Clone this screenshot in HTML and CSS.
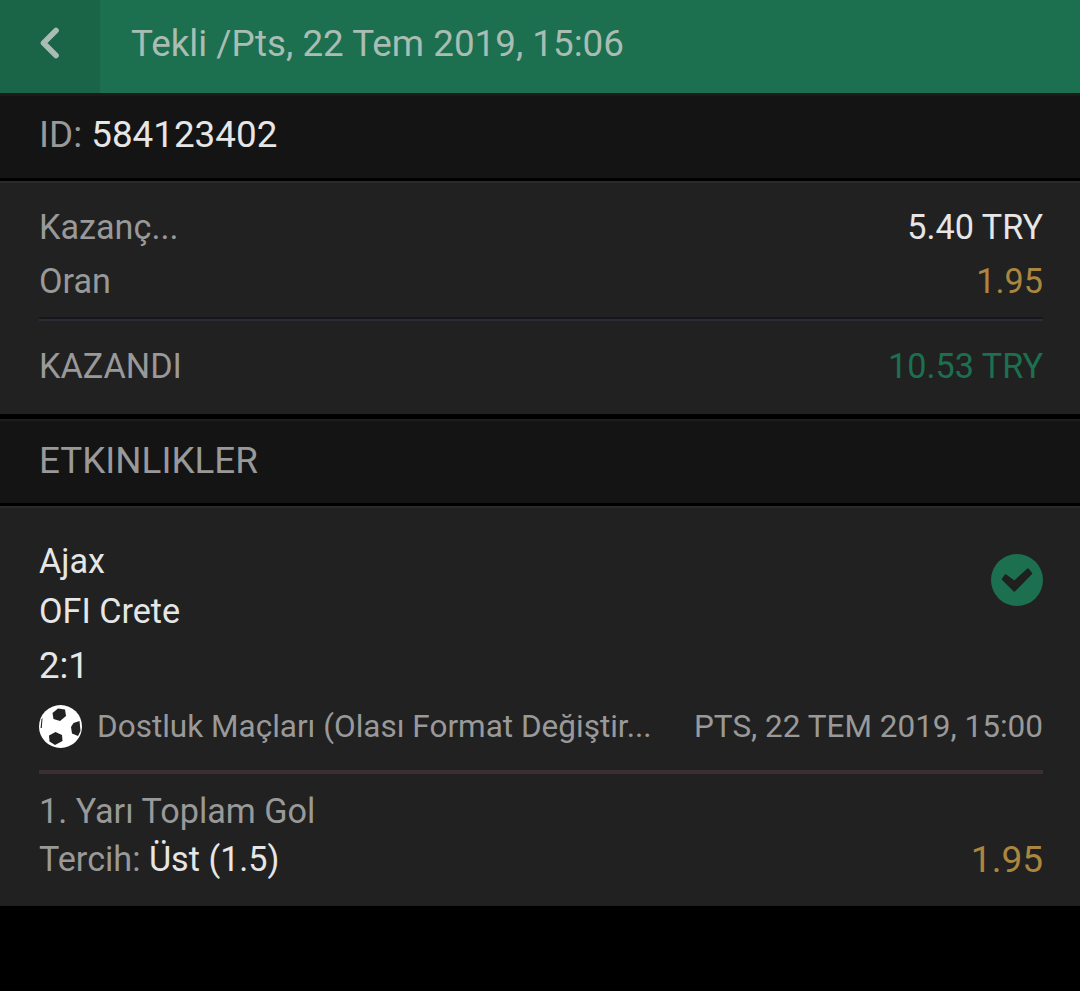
FILE: index.html
```html
<!DOCTYPE html>
<html lang="tr">
<head>
<meta charset="utf-8">
<title>Tekli</title>
<link rel="stylesheet" href="styles.css">
</head>
<body>
<header class="topbar">
  <div class="back">
    <svg width="20" height="32" viewBox="0 0 20 32"><path d="M17 3.5 4.5 16 17 28.5" fill="none" stroke="#a9bdb4" stroke-width="5.6" stroke-linecap="round" stroke-linejoin="round"/></svg>
  </div>
  <div class="title">Tekli /Pts, 22 Tem 2019, 15:06</div>
</header>
<section class="idbar"><span class="muted">ID: </span><span class="white">584123402</span></section>
<section class="summary">
  <div class="row r1"><span class="muted">Kazanç...</span><span class="white">5.40 TRY</span></div>
  <div class="row r2"><span class="muted">Oran</span><span class="gold">1.95</span></div>
  <div class="rule navy"></div>
  <div class="row r3"><span class="muted">KAZANDI</span><span class="green">10.53 TRY</span></div>
</section>
<section class="etk">ETKINLIKLER</section>
<section class="event">
  <div class="match">
    <div>
      <div class="team t1">Ajax</div>
      <div class="team t2">OFI Crete</div>
      <div class="score">2:1</div>
    </div>
    <svg class="check" width="52" height="52" viewBox="0 0 52 52"><circle cx="26" cy="26" r="26" fill="#1c7050"/><path d="M14.5 21 11.5 25.3 23.3 37 40.5 19.500 37 15 23.3 27.5Z" fill="#202020" stroke="#202020" stroke-width="1.6" stroke-linejoin="round"/></svg>
  </div>
  <div class="league">
    <svg class="ball" width="43" height="43" viewBox="0 0 43 43">
      <circle cx="21.5" cy="21.5" r="21.5" fill="#fff"/>
      <path d="M13.5 8 19 3.5 26 4.5 27 11 21 16 14.5 14Z" fill="#222"/>
      <path d="M34.500 18 40.500 16 41.500 26 39 31 33 28.500 32 22Z" fill="#222"/>
      <path d="M10 30.500 16.500 27 23 30 23.500 36 16 40 10.500 36.500Z" fill="#222"/>
      <path d="M2.500 14 3.500 13 2.800 23 1.600 23Z" fill="#222"/>
    </svg>
    <span class="league-name">Dostluk Maçları (Olası Format Değiştir...</span>
    <span class="date">PTS, 22 TEM 2019, 15:00</span>
  </div>
  <div class="rule plum"></div>
  <div class="market">1. Yarı Toplam Gol</div>
  <div class="row pick"><span><span class="muted">Tercih: </span><span class="white">Üst (1.5)</span></span><span class="gold big">1.95</span></div>
</section>
</body>
</html>
```
FILE: styles.css
```css
* { box-sizing: border-box; }
html, body { margin: 0; padding: 0; background: #000; }
body { width: 1080px; height: 991px; overflow: hidden; font-family: Roboto, "Liberation Sans", sans-serif; font-size: 34.2px; color: #999; }
.topbar { height: 93px; background: #1c7050; display: flex; align-items: center; }
.back { width: 100px; height: 93px; background: #1a6548; display: flex; align-items: center; justify-content: center; padding-bottom: 8px; padding-right: 2px; }
.title { margin-left: 31px; color: #a9bdb4; font-size: 36.8px; padding-bottom: 6px; }
.idbar { height: 85px; background: #141414; border-top: 3px solid #1b1b1b; padding: 19px 39px 0; line-height: 40px; font-size: 36.8px; margin-bottom: 3px; }
.muted { color: #999; }
.white { color: #e6e6e6; }
.gold { color: #ab863f; }
.green { color: #1c7050; }
.summary { height: 233px; background: #212121; border-top: 2px solid #2a2a2a; padding: 0 37px 0 39px; margin-bottom: 5px; }
.row { display: flex; justify-content: space-between; align-items: center; }
.r1 { height: 40px; margin-top: 24px; }
.r2 { height: 40px; margin-top: 14px; }
.rule { margin-left: 0; }
.navy { height: 4px; margin-top: 16px; background: linear-gradient(#15171f 50%, #2a2d35 50%); }
.plum { height: 4px; margin-top: 0; background: #3a3032; }
.r3 { height: 40px; margin-top: 25px; }
.etk { height: 84px; background: #141414; border-top: 2px solid #1d1d1d; padding: 20px 39px 0; line-height: 40px; font-size: 36.8px; margin-bottom: 3px; }
.event { height: 400px; background: #212121; border-top: 2px solid #2a2a2a; padding: 0 37px 0 39px; }
.match { display: flex; justify-content: space-between; height: 182px; }
.team { color: #e6e6e6; line-height: 40px; }
.t1 { margin-top: 33px; }
.t2 { margin-top: 10px; }
.score { color: #e6e6e6; line-height: 40px; margin-top: 15px; font-size: 36.5px; }
.check { margin-top: 46px; }
.league { display: flex; align-items: center; height: 80px; font-size: 31.5px; padding-bottom: 8px; }
.ball { flex: none; margin-right: 15px; }
.league-name { flex: 1; white-space: nowrap; }
.date { white-space: nowrap; }
.market { line-height: 40px; margin-top: 17px; }
.pick { margin-top: 8px; height: 40px; }
.big { font-size: 37px; }
```
